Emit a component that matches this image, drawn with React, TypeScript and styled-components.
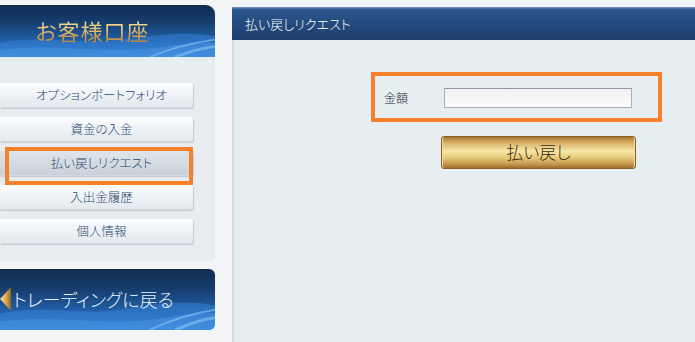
import React from "react";
import styled, { createGlobalStyle } from "styled-components";

const Global = createGlobalStyle`
  html, body { margin: 0; padding: 0; background: #f2f4f6; }
  body { font-family: "Noto Sans CJK JP", "Noto Sans", sans-serif; width: 695px; height: 342px; overflow: hidden; }
  * { box-sizing: border-box; }
`;

const Page = styled.div`
  display: flex;
  gap: 17px;
  width: 695px;
  height: 342px;
  background: #f2f4f6;
`;

const Sidebar = styled.aside`
  width: 215px;
  flex: none;
  padding-top: 5px;
  display: flex;
  flex-direction: column;
`;

const BlueBanner = styled.div<{ $h: number; $radius: string }>`
  position: relative;
  height: ${(p) => p.$h}px;
  border-radius: ${(p) => p.$radius};
  overflow: hidden;
  background: linear-gradient(180deg, #102b50 0%, #173f70 35%, #2260aa 70%, #2f7bd0 100%);
  display: flex;
  align-items: center;
`;

const Waves = styled.svg`
  position: absolute;
  left: 0;
  bottom: 0;
  width: 100%;
  height: 100%;
  pointer-events: none;
`;

const BannerTitle = styled.div`
  position: relative;
  width: 100%;
  text-align: center;
  padding-right: 30px;
  font-size: 22px;
  font-weight: 400;
  letter-spacing: 1px;
  font-feature-settings: "palt";
  background: linear-gradient(180deg, #fff0c4 0%, #efcd7e 40%, #d2a150 70%, #a4742e 100%);
  -webkit-background-clip: text;
  background-clip: text;
  color: transparent;
  margin-top: -2px;
`;

const MenuPanel = styled.nav`
  height: 205px;
  background: #e8edf1;
  border-radius: 0 0 7px 0;
  padding-top: 26px;
  display: flex;
  flex-direction: column;
  gap: 9px;
`;

const MenuButton = styled.div<{ $active?: boolean }>`
  position: relative;
  width: 193px;
  height: 25px;
  border-radius: 0 3px 3px 0;
  background: ${(p) =>
    p.$active
      ? "linear-gradient(180deg, #dfe5ea 0%, #d3dbe2 50%, #c8d1d9 100%)"
      : "linear-gradient(180deg, #fdfeff 0%, #eef2f5 50%, #e2e8ed 100%)"};
  box-shadow: 1px 1px 1px #c2cad1, inset 0 -1px 0 #d3dae0;
  color: #2a4a72;
  font-size: 12.5px;
  font-weight: 300;
  font-feature-settings: "palt";
  display: flex;
  align-items: center;
  justify-content: center;
  padding-left: 10px;
  line-height: 1;
  ${(p) =>
    p.$active &&
    `
    &::after {
      content: "";
      position: absolute;
      left: 5px;
      right: 0;
      top: -4px;
      bottom: -9px;
      border: 4px solid #f6812a;
    }
  `}
`;

const Spacer = styled.div`
  height: 7px;
`;

const BackText = styled.div`
  position: relative;
  display: flex;
  align-items: center;
  gap: 1px;
  color: #e6f3ff;
  font-size: 18px;
  font-weight: 300;
  font-feature-settings: "palt";
  margin-top: -2px;
`;

const Main = styled.main`
  flex: 1;
  padding-top: 7px;
  display: flex;
  flex-direction: column;
`;

const TitleBar = styled.div`
  height: 33px;
  background: linear-gradient(180deg, #6b8cb8 0px, #6b8cb8 1px, #2c568c 2px, #244b7e 50%, #1d3e6b 100%);
  color: #ffffff;
  font-size: 13px;
  font-weight: 300;
  font-feature-settings: "palt";
  display: flex;
  align-items: center;
  padding-left: 13px;
`;

const Content = styled.div`
  flex: 1;
  background: #e7eef2;
  border-left: 2px solid #d3dade;
  padding: 32px 0 0 137px;
  display: flex;
  flex-direction: column;
`;

const FieldBox = styled.div`
  width: 291px;
  height: 50px;
  border: 4px solid #f6812a;
  display: flex;
  align-items: center;
  padding-left: 9px;
`;

const Label = styled.label`
  width: 60px;
  font-size: 12px;
  font-weight: 300;
  color: #1e1e1e;
`;

const Input = styled.input`
  width: 188px;
  height: 20px;
  border: 1px solid #a6b0b9;
  border-top-color: #8e98a2;
  background: linear-gradient(180deg, #f1f1f3 0%, #fbfbfc 100%);
  outline: none;
  margin-top: 1px;
`;

const GoldButton = styled.button`
  margin: 14px 0 0 70px;
  width: 195px;
  height: 33px;
  border: 1px solid #8a5f22;
  border-radius: 3px;
  background: linear-gradient(180deg, #a57631 0%, #d7b062 18%, #f6e7a9 45%, #e9cd7c 65%, #c3964b 88%, #9b6c2c 100%);
  box-shadow: inset 1px 0 0 #f5dfa0, inset -1px 0 0 #f5dfa0;
  color: #3a2a10;
  font-family: "Noto Sans CJK JP", sans-serif;
  font-size: 17px;
  font-weight: 300;
  font-feature-settings: "palt";
  display: flex;
  align-items: center;
  justify-content: center;
  padding: 0 0 2px 0;
`;

const WaveDecor = () => (
  <Waves viewBox="0 0 215 60" preserveAspectRatio="none">
    <path d="M0 44 C40 34 80 46 120 40 C160 34 190 30 215 36 L215 60 L0 60 Z" fill="#3a8ae0" opacity="0.45" />
    <path d="M0 52 C50 44 100 56 150 50 C180 46 200 42 215 44 L215 60 L0 60 Z" fill="#5aa2ec" opacity="0.35" />
    <path d="M150 60 C170 50 190 44 215 40" stroke="#8cc4f5" strokeWidth="2" fill="none" opacity="0.6" />
    <path d="M175 60 C190 54 200 50 215 48" stroke="#9ccff8" strokeWidth="3" fill="none" opacity="0.5" />
  </Waves>
);

const BackArrow = () => (
  <svg width="12" height="26" viewBox="0 0 12 26">
    <defs>
      <linearGradient id="ga" x1="0" y1="0" x2="1" y2="0">
        <stop offset="0" stopColor="#f7e3a6" />
        <stop offset="0.6" stopColor="#d4a54c" />
        <stop offset="1" stopColor="#8e6220" />
      </linearGradient>
    </defs>
    <path d="M0 13 L11 1 L11 25 Z" fill="url(#ga)" />
  </svg>
);

const menu = ["オプションポートフォリオ", "資金の入金", "払い戻しリクエスト", "入出金履歴", "個人情報"];

export default function App() {
  return (
    <>
      <Global />
      <Page>
        <Sidebar>
          <BlueBanner $h={52} $radius="0 9px 0 0">
            <WaveDecor />
            <BannerTitle>お客様口座</BannerTitle>
          </BlueBanner>
          <MenuPanel>
            {menu.map((m, i) => (
              <MenuButton key={m} $active={i === 2}>
                {m}
              </MenuButton>
            ))}
          </MenuPanel>
          <Spacer />
          <BlueBanner $h={61} $radius="0 6px 6px 0">
            <WaveDecor />
            <BackText>
              <BackArrow />
              トレーディングに戻る
            </BackText>
          </BlueBanner>
        </Sidebar>
        <Main>
          <TitleBar>払い戻しリクエスト</TitleBar>
          <Content>
            <FieldBox>
              <Label>金額</Label>
              <Input />
            </FieldBox>
            <GoldButton>払い戻し</GoldButton>
          </Content>
        </Main>
      </Page>
    </>
  );
}
